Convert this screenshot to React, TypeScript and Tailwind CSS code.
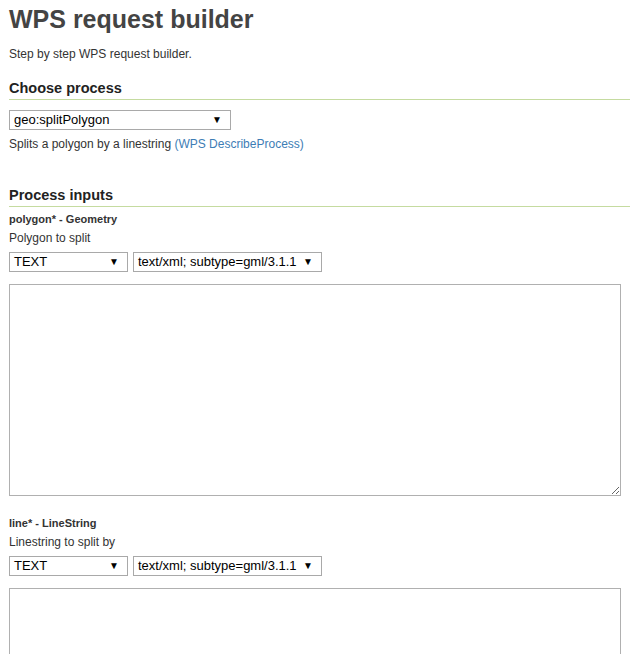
import React from 'react';

function Select({ value, className }: { value: string; className: string }) {
  return (
    <div
      className={`flex h-[20px] items-center justify-between border border-[#a9a9a9] bg-white pl-[4px] pr-[8px] text-[13px] text-black ${className}`}
    >
      <span>{value}</span>
      <span className="text-[10px] leading-none">▼</span>
    </div>
  );
}

function Heading({ children }: { children: React.ReactNode }) {
  return (
    <h2 className="mr-[-10px] border-b border-[#c5dba0] pb-[2px] text-[14.5px] font-bold leading-[18px] text-[#222]">
      {children}
    </h2>
  );
}

function Input({ name, type, doc }: { name: string; type: string; doc: string }) {
  return (
    <div className="flex flex-col">
      <div className="text-[11px] font-bold leading-[14px] text-[#333]">
        {name}* - {type}
      </div>
      <div className="mt-[5px] text-[12px] leading-[14px] text-[#333]">{doc}</div>
      <div className="mt-[7px] flex gap-[5px]">
        <Select value="TEXT" className="w-[119px]" />
        <Select value="text/xml; subtype=gml/3.1.1" className="w-[189px]" />
      </div>
      <textarea className="mt-[12px] h-[212px] w-[612px] border border-[#b0b0b0] bg-white" />
    </div>
  );
}

export default function App() {
  return (
    <div
      className="min-h-screen bg-white pl-[9px] pr-[10px] text-[#333]"
      style={{ fontFamily: '"Liberation Sans", Arial, sans-serif' }}
    >
      <h1 className="pt-[3px] text-[25px] font-bold leading-[32px] text-[#444]">WPS request builder</h1>
      <p className="mt-[12px] text-[12px] leading-[14px]">Step by step WPS request builder.</p>

      <div className="mt-[18px]">
        <Heading>Choose process</Heading>
        <Select value="geo:splitPolygon" className="mt-[10px] w-[222px]" />
        <p className="mt-[7px] text-[12px] leading-[14px]">
          Splits a polygon by a linestring{' '}
          <span className="text-[#3d7db5]">(WPS DescribeProcess)</span>
        </p>
      </div>

      <div className="mt-[35px]">
        <Heading>Process inputs</Heading>
        <div className="mt-[5px] flex flex-col gap-[20px]">
          <Input name="polygon" type="Geometry" doc="Polygon to split" />
          <Input name="line" type="LineString" doc="Linestring to split by" />
        </div>
      </div>
    </div>
  );
}
